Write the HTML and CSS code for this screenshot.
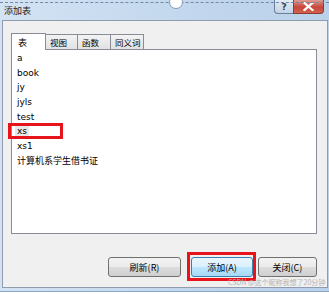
FILE: index.html
```html
<!DOCTYPE html>
<html lang="zh-CN">
<head>
    <meta charset="UTF-8">
    <title>添加表</title>
    <link rel="stylesheet" href="styles.css">
</head>
<body>
    <div class="window">
        <div class="marquee"></div>
        <div class="handle"></div>
        <div class="titlebar">
            <span class="title">添加表</span>
            <div class="caption-buttons">
                <span class="cap-btn help">?</span>
                <span class="cap-btn close">
                    <svg width="11" height="9" viewBox="0 0 11 9">
                        <path d="M1.5 1 L9.5 8 M9.5 1 L1.5 8" stroke="#ffffff" stroke-width="2.2" stroke-linecap="square"/>
                    </svg>
                </span>
            </div>
        </div>
        <div class="client">
            <div class="tabs">
                <span class="tab active">表</span>
                <span class="tab">视图</span>
                <span class="tab">函数</span>
                <span class="tab">同义词</span>
            </div>
            <ul class="list">
                <li>a</li>
                <li>book</li>
                <li>jy</li>
                <li>jyls</li>
                <li>test</li>
                <li class="marked"><span class="focus">xs</span></li>
                <li>xs1</li>
                <li class="cjk">计算机系学生借书证</li>
            </ul>
            <div class="actions">
                <button class="btn btn-refresh">刷新(R)</button>
                <button class="btn btn-add marked">添加(A)</button>
                <button class="btn btn-close">关闭(C)</button>
            </div>
        </div>
        <div class="watermark">CSDN @这个昵称我想了20分钟</div>
    </div>
</body>
</html>
```

FILE: styles.css
```css
body {
    margin: 0;
    background: #ffffff;
    font-family: "DejaVu Sans", "Noto Sans CJK SC", sans-serif;
    font-size: 9px;
    color: #000000;
}

.window {
    position: relative;
    width: 329px;
    height: 292px;
    box-sizing: border-box;
    padding: 0 1px 0 2px;
    background: linear-gradient(to right, #d3e3f3 0%, #c4d8ee 50%, #bad1ea 100%);
    border-bottom: 1px solid #8aa7c6;
}

.marquee {
    position: absolute;
    top: 2px;
    left: 0;
    right: 0;
    border-top: 1px dashed #6f8aa8;
}

.handle {
    position: absolute;
    top: -5px;
    left: 169px;
    width: 12px;
    height: 12px;
    border-radius: 50%;
    background: #ffffff;
    border: 1px solid #8a9aae;
}

.titlebar {
    height: 20px;
    display: flex;
    align-items: center;
    padding: 0 4px 0 2px;
}

.title {
    font-family: "Noto Sans CJK SC", sans-serif;
    font-size: 9px;
    color: #1e1e1e;
    padding-top: 1px;
}

.caption-buttons {
    margin-left: auto;
    align-self: flex-start;
    display: flex;
}

.cap-btn {
    height: 14px;
    box-sizing: border-box;
    display: flex;
    justify-content: center;
    align-items: center;
    border: 1px solid #6b7f98;
    border-top: none;
}

.help {
    width: 19px;
    border-radius: 0 0 0 4px;
    border-right: none;
    background: linear-gradient(to bottom, #e4ecf5, #c3d3e5);
    color: #2c3e55;
    font-weight: bold;
    font-size: 9px;
}

.close {
    width: 31px;
    border-radius: 0 0 4px 0;
    border-color: #8c3a33;
    background: linear-gradient(to bottom, #e29a8f, #c7463a 55%, #d4624f);
}

.close svg {
    display: block;
}

.client {
    height: 268px;
    box-sizing: border-box;
    background: #f0f0f0;
    border: 1px solid #8e9cae;
    padding: 11px 10px 0 8px;
}

.tabs {
    display: flex;
    align-items: flex-end;
    height: 17px;
}

.tab {
    flex-shrink: 0;
    height: 15px;
    box-sizing: border-box;
    padding: 0 3px 0 4px;
    display: flex;
    align-items: center;
    white-space: nowrap;
    font-family: "Noto Sans CJK SC", sans-serif;
    font-size: 8.5px;
    background: linear-gradient(to bottom, #f3f3f3, #e1e1e1);
    border: 1px solid #898c95;
    border-bottom: none;
    border-left: none;
}

.tab:nth-child(2) { width: 32px; }
.tab:nth-child(3) { width: 33px; }
.tab:nth-child(4) { width: 33px; }

.tab.active {
    width: 35px;
    height: 17px;
    padding-left: 6px;
    font-size: 9px;
    background: #ffffff;
    border-left: 1px solid #898c95;
    position: relative;
    top: 1px;
}

.list {
    list-style: none;
    margin: 0;
    padding: 1px 0 0 0;
    height: 185px;
    box-sizing: border-box;
    background: #ffffff;
    border: 1px solid #898c95;
}

.list li {
    position: relative;
    height: 14.7px;
    line-height: 14.7px;
    padding-left: 5px;
}

.list li.cjk {
    font-family: "Noto Sans CJK SC", sans-serif;
}

.focus {
    display: inline-block;
    background: #e8e8e8;
    padding: 0 2px;
    margin-left: -2px;
}

.list li.marked::after {
    content: "";
    position: absolute;
    left: -4px;
    top: -1px;
    width: 55px;
    height: 16px;
    box-sizing: border-box;
    border: 3px solid #e8141b;
}

.actions {
    display: flex;
    justify-content: flex-end;
    margin-top: 23px;
}

.btn {
    position: relative;
    height: 20px;
    padding: 0;
    font-family: "Noto Sans CJK SC", sans-serif;
    font-size: 9px;
    color: #000000;
    border: 1px solid #707070;
    border-radius: 3px;
    background: linear-gradient(to bottom, #f2f2f2 0%, #ebebeb 50%, #dddddd 51%, #cfcfcf 100%);
}

.btn-refresh {
    width: 73px;
}

.btn-add {
    width: 62px;
    margin-left: 10px;
    border-color: #3c7fb1;
    background: linear-gradient(to bottom, #eaf6fd 0%, #d9f0fc 50%, #bee6fd 51%, #a7d9f5 100%);
}

.btn-close {
    width: 59px;
    margin-left: 5px;
}

.btn.marked::after {
    content: "";
    position: absolute;
    left: -5px;
    top: -6px;
    right: -4px;
    bottom: -5px;
    border: 3px solid #e8141b;
}

.watermark {
    position: absolute;
    left: 228px;
    top: 277px;
    font-family: "Noto Sans CJK SC", sans-serif;
    font-size: 7px;
    color: #b4b4b4;
    white-space: nowrap;
}
```
